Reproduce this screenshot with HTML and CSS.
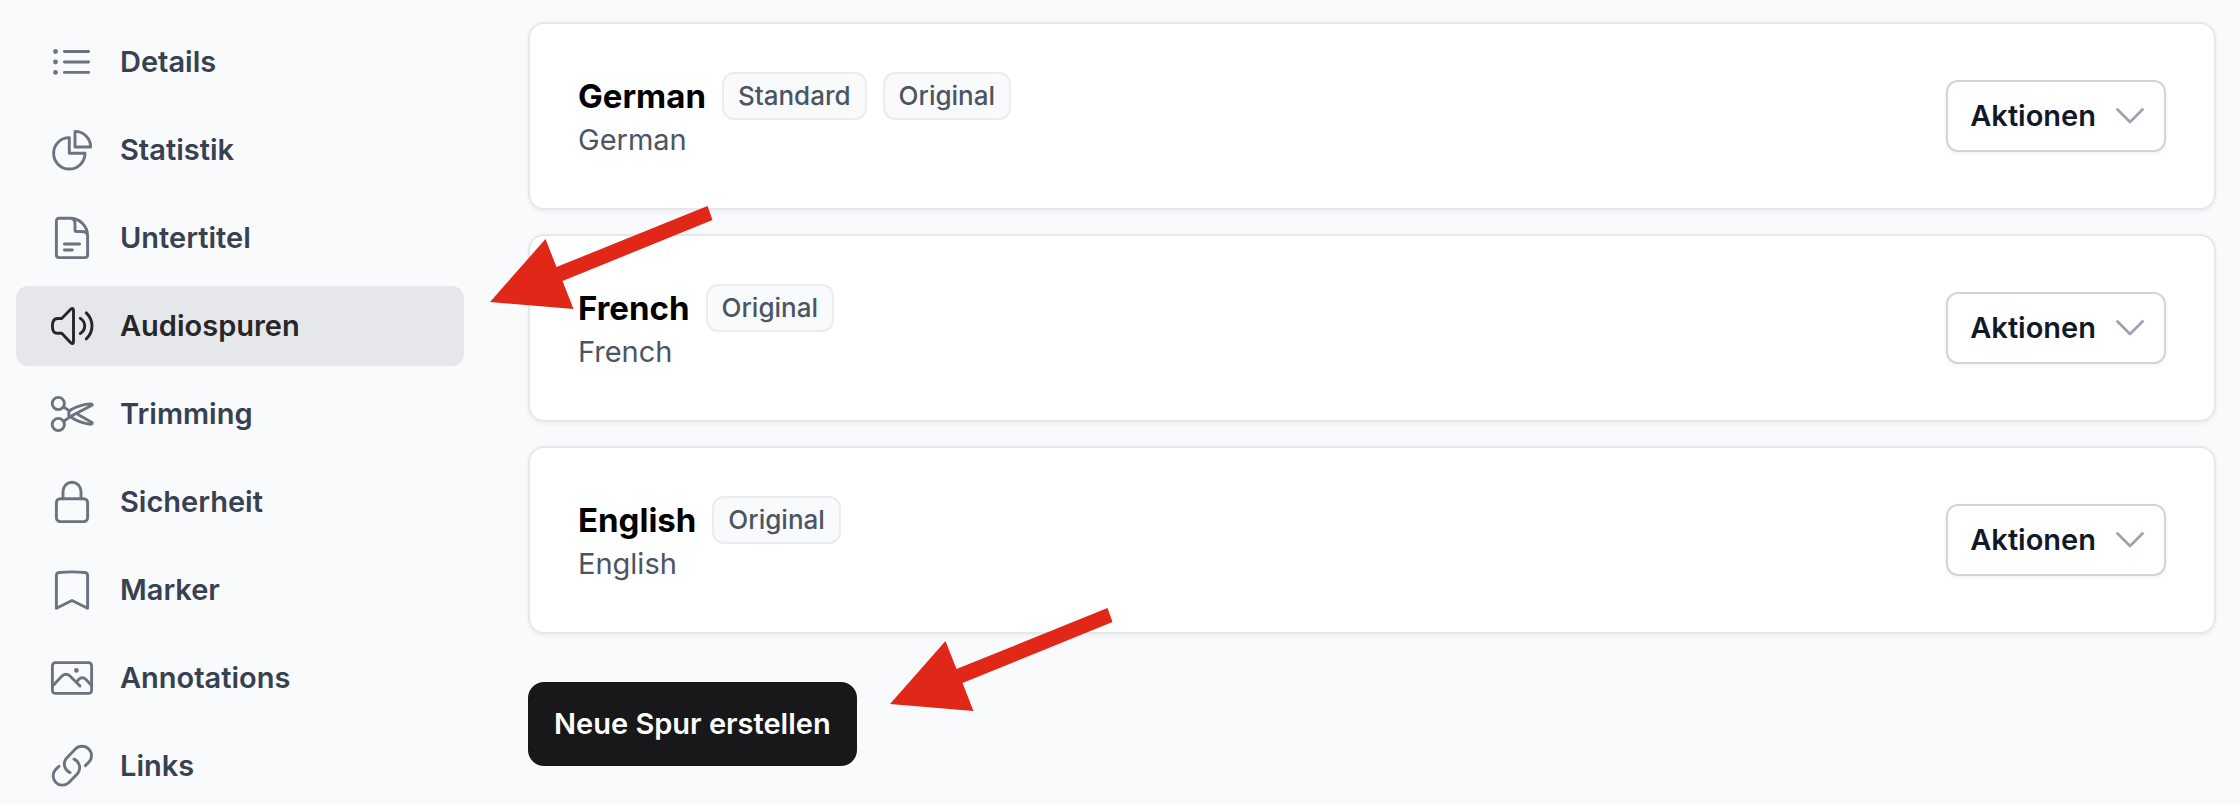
FILE: index.html
```html
<!DOCTYPE html>
<html lang="de">
<head>
<meta charset="utf-8">
<meta name="viewport" content="width=device-width, initial-scale=1">
<title>Audiospuren</title>
<link rel="stylesheet" href="styles.css">
</head>
<body>
<div class="layout">
  <nav class="sidebar" aria-label="Video">
    <a class="nav-item" href="#details">
      <svg class="icon" viewBox="0 0 48 48" aria-hidden="true"><path d="M16.4 13.5H40.6M16.4 24H40.6M16.4 34.4H40.6"/><g class="solid"><circle cx="7.5" cy="13.5" r="2.4"/><circle cx="7.5" cy="24" r="2.4"/><circle cx="7.5" cy="34.4" r="2.4"/></g></svg>
      Details
    </a>
    <a class="nav-item" href="#statistik">
      <svg class="icon" viewBox="0 0 48 48" aria-hidden="true"><path d="M21.3 11.6V27.3H37A15.7 15.7 0 1 1 21.3 11.6ZM27 21V5.4A15.6 15.6 0 0 1 42.6 21Z"/></svg>
      Statistik
    </a>
    <a class="nav-item" href="#untertitel">
      <svg class="icon" viewBox="0 0 48 48" aria-hidden="true"><path d="M22 4.3H11a2.6 2.6 0 0 0-2.6 2.6V41a2.6 2.6 0 0 0 2.6 2.6H37a2.6 2.6 0 0 0 2.6-2.6V22C39.6 12 32 4.3 22 4.3ZM22 4.3C25.5 4.3 27 6.5 27 10V16.2Q27 17.5 28.3 17.5H33.5C37 17.5 39.6 19 39.6 22M16.4 30H31.6M16.4 36H24.3"/></svg>
      Untertitel
    </a>
    <a class="nav-item nav-item-active" href="#audiospuren" aria-current="page">
      <svg class="icon" viewBox="0 0 48 48" aria-hidden="true"><path d="M13.7 16.5H9.5C6 16.5 4.4 18.5 4.4 24S6 31.3 9.5 31.3H13.7L22.7 40.7Q25.5 42.7 25.5 39.5V8.5Q25.5 5.3 22.7 7.3ZM32.3 16.4Q36.7 19.2 36.7 24T32.3 31.4M38.3 10.9Q44 16.5 44 24T38.3 36.9"/></svg>
      Audiospuren
    </a>
    <a class="nav-item" href="#trimming">
      <svg class="icon" viewBox="0 0 48 48" aria-hidden="true"><circle cx="10.3" cy="13.5" r="6.1"/><circle cx="10.3" cy="34.5" r="6.1"/><path d="M15.6 16.9L21.5 21M15.6 31.2L24 25.6L44 15.3Q45 14.3 42.5 13.9C35 14.4 28 17 23.3 19.5Q20.8 21 20.8 23.5V27.5M30 24.5L44 32.6Q45 33.6 42.5 34.2C35.5 33.5 28 30.5 23.5 27.5"/></svg>
      Trimming
    </a>
    <a class="nav-item" href="#sicherheit">
      <svg class="icon" viewBox="0 0 48 48" aria-hidden="true"><rect x="8.4" y="20.7" width="31.2" height="22.9" rx="3.8"/><path d="M15 20.7V13.3a9 9 0 0 1 18 0V20.7"/></svg>
      Sicherheit
    </a>
    <a class="nav-item" href="#marker">
      <svg class="icon" viewBox="0 0 48 48" aria-hidden="true"><path d="M8.4 42.3V9.5Q8.4 6.8 11.2 6.5Q24 5.3 36.8 6.5Q39.6 6.8 39.6 9.5V42.3L24 34.5Z"/></svg>
      Marker
    </a>
    <a class="nav-item" href="#annotations">
      <svg class="icon" viewBox="0 0 48 48" aria-hidden="true"><rect x="4.4" y="8.6" width="39.2" height="30.8" rx="3"/><path d="M5.3 31.3L14 22Q18 18.4 22 22L32 32M29 27.8L30.5 25.5Q34.3 22 38 25.5L43 31"/><circle class="solid" cx="28.4" cy="16.4" r="2.3"/></svg>
      Annotations
    </a>
    <a class="nav-item" href="#links">
      <svg class="icon" viewBox="0 0 48 48" aria-hidden="true"><path d="M37.4 23.6L40.7 20.3A9.4 9.4 0 0 0 27.4 7L18 16.7A9.4 9.4 0 0 0 22 30.6M11 24.3L7.3 27.9A9.3 9.3 0 0 0 20.4 41L29.7 31.5A9.4 9.4 0 0 0 26 17.2"/></svg>
      Links
    </a>
  </nav>

  <main class="content">
    <ul class="tracks">
      <li class="card">
        <div>
          <div class="track-head">
            <h2 class="track-title">German</h2>
            <span class="badge">Standard</span>
            <span class="badge">Original</span>
          </div>
          <p class="track-language">German</p>
        </div>
        <button class="menu-button" type="button" aria-haspopup="menu">Aktionen
          <svg class="chevron" viewBox="0 0 28 16" aria-hidden="true"><path d="M1.5 1.5L14 14L26.5 1.5"/></svg>
        </button>
      </li>
      <li class="card">
        <div>
          <div class="track-head">
            <h2 class="track-title">French</h2>
            <span class="badge">Original</span>
          </div>
          <p class="track-language">French</p>
        </div>
        <button class="menu-button" type="button" aria-haspopup="menu">Aktionen
          <svg class="chevron" viewBox="0 0 28 16" aria-hidden="true"><path d="M1.5 1.5L14 14L26.5 1.5"/></svg>
        </button>
      </li>
      <li class="card">
        <div>
          <div class="track-head">
            <h2 class="track-title">English</h2>
            <span class="badge">Original</span>
          </div>
          <p class="track-language">English</p>
        </div>
        <button class="menu-button" type="button" aria-haspopup="menu">Aktionen
          <svg class="chevron" viewBox="0 0 28 16" aria-hidden="true"><path d="M1.5 1.5L14 14L26.5 1.5"/></svg>
        </button>
      </li>
    </ul>
    <button class="primary-button" type="button">Neue Spur erstellen</button>
  </main>

  <svg class="arrow arrow-nav" viewBox="0 0 224 104" aria-hidden="true"><path d="M0 96L55.5 33L66.5 61L217.5 0L222.5 14L72.5 75L83.5 103Z"/></svg>
  <svg class="arrow arrow-create" viewBox="0 0 224 104" aria-hidden="true"><path d="M0 96L55.5 33L66.5 61L217.5 0L222.5 14L72.5 75L83.5 103Z"/></svg>
</div>
</body>
</html>
```
FILE: styles.css
```css
* {
  box-sizing: border-box;
}

body {
  margin: 0;
  background: #f9fafb;
  font-family: Inter, "Liberation Sans", sans-serif;
  font-size: 29px;
  line-height: 40px;
  color: #374151;
}

.layout {
  position: relative;
  display: flex;
  gap: 64px;
  height: 100vh;
  padding: 22px 24px 0 16px;
  overflow: hidden;
}

.sidebar {
  display: flex;
  flex: 0 0 448px;
  flex-direction: column;
  gap: 8px;
}

.nav-item {
  display: flex;
  flex: none;
  align-items: center;
  gap: 24px;
  padding: 16px 32px;
  border-radius: 12px;
  color: #374151;
  font-weight: 600;
  line-height: 48px;
  text-decoration: none;
}

.nav-item-active {
  background: #e5e7eb;
  color: #27272a;
}

.icon {
  flex: none;
  width: 48px;
  height: 48px;
  fill: none;
  stroke: #6b7280;
  stroke-width: 2.9;
  stroke-linecap: round;
  stroke-linejoin: round;
}

.icon .solid {
  fill: #6b7280;
  stroke: none;
}

.nav-item-active .icon {
  stroke: #27272a;
}

.content {
  flex: 1;
  min-width: 0;
}

.tracks {
  display: flex;
  flex-direction: column;
  gap: 24px;
  margin: 0 0 48px;
  padding: 0;
  list-style: none;
}

.card {
  display: flex;
  align-items: center;
  justify-content: space-between;
  padding: 48px;
  border: 2px solid #e5e7eb;
  border-radius: 16px;
  background: #fff;
  box-shadow: 0 2px 4px rgba(0, 0, 0, 0.05);
}

.track-head {
  display: flex;
  align-items: center;
  gap: 16px;
}

.track-title {
  margin: 0;
  color: #000;
  font-size: 33px;
  font-weight: 700;
}

.badge {
  padding: 2px 14px;
  border: 2px solid #ebecee;
  border-radius: 12px;
  background: #f9fafb;
  color: #4b5563;
  font-size: 26px;
  font-weight: 500;
}

.track-language {
  margin: 0;
  color: #4b5563;
}

.menu-button,
.primary-button {
  font: inherit;
  font-weight: 600;
}

.menu-button {
  display: flex;
  align-items: center;
  gap: 20px;
  padding: 14px 20px 14px 22px;
  border: 2px solid #d1d5db;
  border-radius: 12px;
  background: #fff;
  color: #111827;
  box-shadow: 0 2px 4px rgba(0, 0, 0, 0.05);
}

.chevron {
  width: 28px;
  height: 16px;
  fill: none;
  stroke: #9ca3af;
  stroke-width: 2.8;
  stroke-linecap: round;
  stroke-linejoin: round;
}

.primary-button {
  padding: 22px 26px;
  border: 0;
  border-radius: 16px;
  background: #18181b;
  color: #fff;
}

.arrow {
  position: absolute;
  width: 224px;
  height: 104px;
  fill: #e02718;
  pointer-events: none;
}

.arrow-nav {
  top: 206px;
  left: 490px;
}

.arrow-create {
  top: 608px;
  left: 890px;
}
```
